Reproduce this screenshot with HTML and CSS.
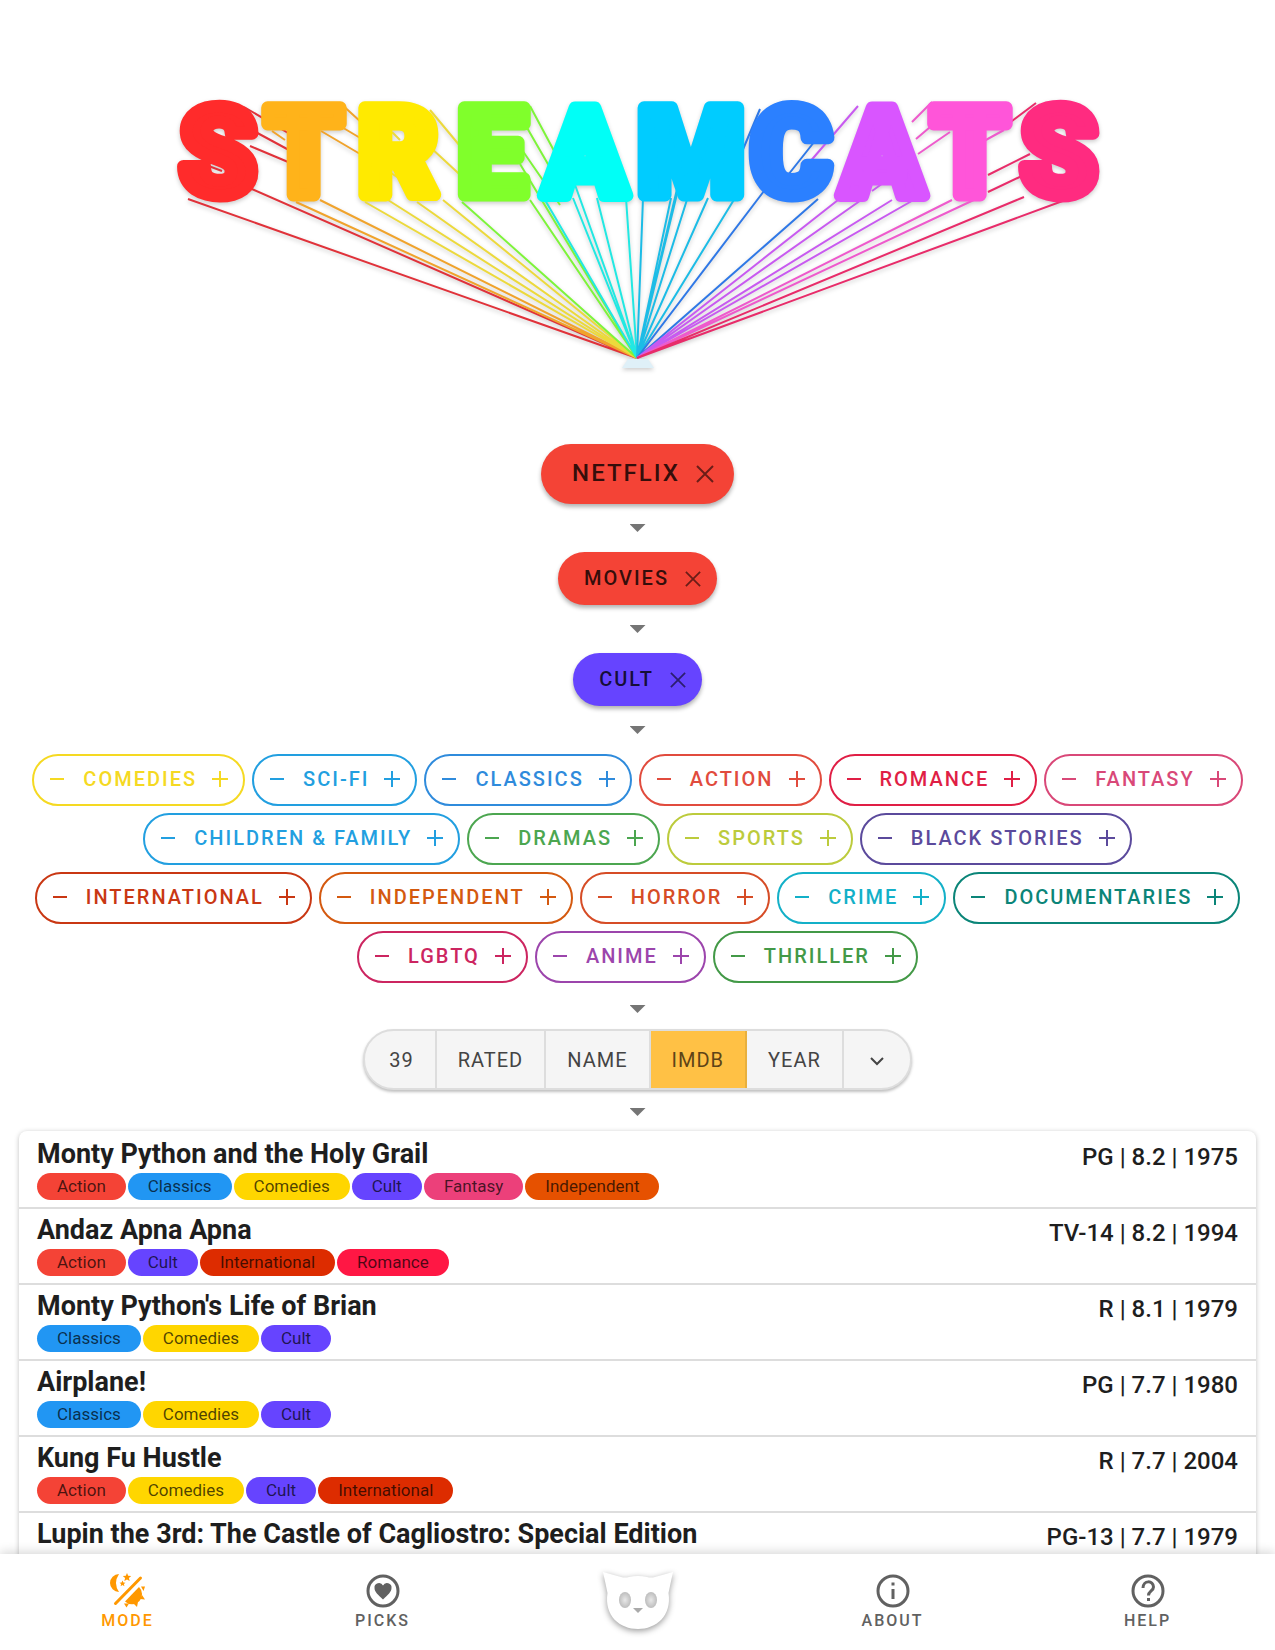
FILE: index.html
```html
<!DOCTYPE html>
<html lang="en">
<head>
<meta charset="utf-8">
<meta name="viewport" content="width=device-width, initial-scale=1">
<title>Streamcats</title>
<link rel="stylesheet" href="styles.css">
</head>
<body>
<svg class="sprite" width="0" height="0" aria-hidden="true">
  <symbol id="close" viewBox="0 0 18 18"><path d="M1 1 17 17M17 1 1 17" fill="none" stroke="currentColor" stroke-width="2"/></symbol>
  <symbol id="minus" viewBox="0 0 16 16"><path d="M1 8H15" fill="none" stroke="currentColor" stroke-width="2"/></symbol>
  <symbol id="plus" viewBox="0 0 16 16"><path d="M0 8H16M8 0V16" fill="none" stroke="currentColor" stroke-width="2"/></symbol>
</svg>
<main>
  <h1 class="logo">
    <svg viewBox="0 0 1275 386" role="img" aria-label="Streamcats">
      <g fill="none" stroke-width="2">
        <path stroke="#e0323a" d="M188 199 637 358 245 186M244 107 300 140M250 129 300 156M250 146 300 167M206 165 222 171"/>
        <path stroke="#f0a32c" d="M296 202 637 358 320 200M340 103 372 132M340 126 372 145M321 131 372 161M272 131 285 140"/>
        <path stroke="#ecd93c" d="M365 202 637 358 388 200M417 202 637 358 443 200M430 110 470 158M430 147 470 184M391 173 417 190M392 132 400 140"/>
        <path stroke="#7ef43a" d="M462 202 637 358 530 200M530 106 560 162M526 126 560 185M520 147 560 205M520 164 637 358"/>
        <path stroke="#22e8e2" d="M545 200 637 358 573 198M574 182 637 358 597 198M626 198 637 358"/>
        <path stroke="#1cbce6" d="M643 198 637 358 671 198M677 194 637 358 682 168M697 168 637 358 708 198M735 198 637 358"/>
        <path stroke="#2f78e6" d="M764 191 637 358 818 199M736 166 760 109M788 175 826 127"/>
        <path stroke="#c85af0" d="M838 200 637 358 864 198M892 200 637 358 917 198M802 171 858 106M872 191 890 178"/>
        <path stroke="#ee5acc" d="M952 200 637 358 978 198M912 122 932 102M916 139 936 122M918 154 950 132M984 141 1004 130"/>
        <path stroke="#e82c6a" d="M1024 197 637 358 1068 199M1008 124 1036 103M988 175 1030 154M988 192 1026 174M1066 138 1090 129"/>
      </g>
      <path class="logo-base" d="M628 359H648L654 368H622Z"/>
      <text class="logo-text" y="195" text-anchor="middle"><tspan x="218" class="l1">S</tspan><tspan x="304" class="l2">T</tspan><tspan x="398" class="l3">R</tspan><tspan x="492" class="l4">E</tspan><tspan x="585" class="l5">A</tspan><tspan x="691" class="l6">M</tspan><tspan x="791" class="l7">C</tspan><tspan x="882" class="l8">A</tspan><tspan x="970" class="l9">T</tspan><tspan x="1059" class="l10">S</tspan></text>
    </svg>
  </h1>

  <section class="path">
    <button class="pick large red">NETFLIX <svg><use href="#close"/></svg></button>
    <i class="arrow"></i>
    <button class="pick red">MOVIES <svg><use href="#close"/></svg></button>
    <i class="arrow"></i>
    <button class="pick cult">CULT <svg><use href="#close"/></svg></button>
    <i class="arrow"></i>
  </section>

  <section class="genres">
    <button class="chip c-comedies"><svg><use href="#minus"/></svg><span>COMEDIES</span><svg><use href="#plus"/></svg></button>
    <button class="chip c-scifi"><svg><use href="#minus"/></svg><span>SCI-FI</span><svg><use href="#plus"/></svg></button>
    <button class="chip c-classics"><svg><use href="#minus"/></svg><span>CLASSICS</span><svg><use href="#plus"/></svg></button>
    <button class="chip c-action"><svg><use href="#minus"/></svg><span>ACTION</span><svg><use href="#plus"/></svg></button>
    <button class="chip c-romance"><svg><use href="#minus"/></svg><span>ROMANCE</span><svg><use href="#plus"/></svg></button>
    <button class="chip c-fantasy"><svg><use href="#minus"/></svg><span>FANTASY</span><svg><use href="#plus"/></svg></button>
    <button class="chip c-scifi"><svg><use href="#minus"/></svg><span>CHILDREN &amp; FAMILY</span><svg><use href="#plus"/></svg></button>
    <button class="chip c-dramas"><svg><use href="#minus"/></svg><span>DRAMAS</span><svg><use href="#plus"/></svg></button>
    <button class="chip c-sports"><svg><use href="#minus"/></svg><span>SPORTS</span><svg><use href="#plus"/></svg></button>
    <button class="chip c-black"><svg><use href="#minus"/></svg><span>BLACK STORIES</span><svg><use href="#plus"/></svg></button>
    <button class="chip c-international"><svg><use href="#minus"/></svg><span>INTERNATIONAL</span><svg><use href="#plus"/></svg></button>
    <button class="chip c-independent"><svg><use href="#minus"/></svg><span>INDEPENDENT</span><svg><use href="#plus"/></svg></button>
    <button class="chip c-horror"><svg><use href="#minus"/></svg><span>HORROR</span><svg><use href="#plus"/></svg></button>
    <button class="chip c-crime"><svg><use href="#minus"/></svg><span>CRIME</span><svg><use href="#plus"/></svg></button>
    <button class="chip c-documentaries"><svg><use href="#minus"/></svg><span>DOCUMENTARIES</span><svg><use href="#plus"/></svg></button>
    <button class="chip c-lgbtq"><svg><use href="#minus"/></svg><span>LGBTQ</span><svg><use href="#plus"/></svg></button>
    <button class="chip c-anime"><svg><use href="#minus"/></svg><span>ANIME</span><svg><use href="#plus"/></svg></button>
    <button class="chip c-thriller"><svg><use href="#minus"/></svg><span>THRILLER</span><svg><use href="#plus"/></svg></button>
  </section>

  <section class="sorting">
    <i class="arrow"></i>
    <div class="segments">
      <button>39</button><button>RATED</button><button>NAME</button><button class="on">IMDB</button><button>YEAR</button><button aria-label="Descending"><svg viewBox="0 0 20 20"><path d="M4 8l6 6 6-6" fill="none" stroke="currentColor" stroke-width="2"/></svg></button>
    </div>
    <i class="arrow"></i>
  </section>

  <ul class="films">
    <li><div><h2>Monty Python and the Holy Grail</h2><p class="tags"><span class="t-action">Action</span><span class="t-classics">Classics</span><span class="t-comedies">Comedies</span><span class="t-cult">Cult</span><span class="t-fantasy">Fantasy</span><span class="t-independent">Independent</span></p></div><p class="meta">PG | 8.2 | 1975</p></li>
    <li><div><h2>Andaz Apna Apna</h2><p class="tags"><span class="t-action">Action</span><span class="t-cult">Cult</span><span class="t-international">International</span><span class="t-romance">Romance</span></p></div><p class="meta">TV-14 | 8.2 | 1994</p></li>
    <li><div><h2>Monty Python's Life of Brian</h2><p class="tags"><span class="t-classics">Classics</span><span class="t-comedies">Comedies</span><span class="t-cult">Cult</span></p></div><p class="meta">R | 8.1 | 1979</p></li>
    <li><div><h2>Airplane!</h2><p class="tags"><span class="t-classics">Classics</span><span class="t-comedies">Comedies</span><span class="t-cult">Cult</span></p></div><p class="meta">PG | 7.7 | 1980</p></li>
    <li><div><h2>Kung Fu Hustle</h2><p class="tags"><span class="t-action">Action</span><span class="t-comedies">Comedies</span><span class="t-cult">Cult</span><span class="t-international">International</span></p></div><p class="meta">R | 7.7 | 2004</p></li>
    <li><div><h2>Lupin the 3rd: The Castle of Cagliostro: Special Edition</h2></div><p class="meta">PG-13 | 7.7 | 1979</p></li>
  </ul>
</main>

<nav class="bar">
  <button class="on"><svg viewBox="0 0 34 34"><path d="M8 0A9 9 0 0 0 8 18Q2 9 8 0Z"/><path d="M16 -1l1.2 2.8 3 .2-2.3 2 .8 3-2.7-1.6L13.3 7l.8-3-2.3-2 3-.2zM11.500 6.500l.9 2 2.100.2-1.600 1.400.5 2.100-1.900-1.100-1.900 1.100.5-2.100-1.600-1.400 2.100-.2z"/><path d="M29.500 4 4.500 29.500" stroke="currentColor" stroke-width="3" stroke-linecap="round"/><path d="M28 13A10 10 0 0 1 14 27.500Z"/><path d="M30 12.500h4l-1.500 4.500zM31 21l3 4.500-5-.5zM22 29l5-1-1 5zM13 29.500h5l-2.500 4z"/></svg>MODE</button>
  <button><svg viewBox="0 0 34 34"><circle cx="17" cy="17" r="15" fill="none" stroke="currentColor" stroke-width="3"/><path d="M17 25.500C12 20.500 8.500 18 8.500 14A4.500 4.500 0 0 1 17 11.500 4.500 4.500 0 0 1 25.500 14C25.500 18 22 20.500 17 25.500Z"/></svg>PICKS</button>
  <button aria-label="Home"><svg class="cat" viewBox="0 0 74 64"><defs><radialGradient id="eye"><stop offset="0" stop-color="#e8e8e8"/><stop offset="1" stop-color="#bdbdbd"/></radialGradient></defs><path fill="#fff" d="M2 3 20 8Q24 9 28 8 37 6 46 8 50 9 54 8L72 3Q70 12 67.500 24C71 47 55 60 37 60S3 47 6.500 24Q4 12 2 3Z"/><g fill="url(#eye)"><ellipse cx="24" cy="31" rx="6" ry="8"/><ellipse cx="50" cy="31" rx="6" ry="8"/></g><path fill="#aaa" d="M32 39H42L37 44Z"/></svg></button>
  <button><svg viewBox="0 0 34 34"><circle cx="17" cy="17" r="15" fill="none" stroke="currentColor" stroke-width="3"/><path d="M15.500 8.500h3v3h-3zM15.500 15h3v10h-3z"/></svg>ABOUT</button>
  <button><svg viewBox="0 0 34 34"><circle cx="17" cy="17" r="15" fill="none" stroke="currentColor" stroke-width="3"/><path d="M12 14C12 6 22.500 6 22.500 13 22.500 17 17.500 17 17.500 21.500" fill="none" stroke="currentColor" stroke-width="3"/><path d="M16 24h3v3h-3z"/></svg>HELP</button>
</nav>
</body>
</html>
```
FILE: styles.css
```css
* { box-sizing: border-box; }
body { margin: 0; background: #fff; color: #1e1e1e; font-family: Roboto, "Liberation Sans", sans-serif; height: 100vh; overflow: hidden; display: flex; flex-direction: column; }
main { flex: 1; overflow: hidden; min-height: 0; }
button { font: inherit; border: 0; background: none; cursor: pointer; margin: 0; }
h1, h2, p, ul { margin: 0; padding: 0; }
.sprite { position: absolute; }

.logo svg { display: block; width: 100%; filter: drop-shadow(0 2px 2px rgba(0, 0, 0, .2)); }
.logo-base { fill: #dff0f8; }
.logo-text { font-size: 122px; font-weight: 900; stroke-width: 13px; stroke-linejoin: round; }
.l1 { fill: #ff2b2b; stroke: #ff2b2b; }
.l2 { fill: #ffb31a; stroke: #ffb31a; }
.l3 { fill: #ffea00; stroke: #ffea00; }
.l4 { fill: #80ff2b; stroke: #80ff2b; }
.l5 { fill: #00fff7; stroke: #00fff7; }
.l6 { fill: #00ccff; stroke: #00ccff; }
.l7 { fill: #2b80ff; stroke: #2b80ff; }
.l8 { fill: #d955ff; stroke: #d955ff; }
.l9 { fill: #ff55d9; stroke: #ff55d9; }
.l10 { fill: #ff2b80; stroke: #ff2b80; }

.path { display: flex; flex-direction: column; align-items: center; padding-top: 58px; }
.arrow { width: 16px; height: 8px; margin: 20px 0; background: #757575; clip-path: polygon(0 0, 100% 0, 50% 100%); }
.pick { display: flex; align-items: center; gap: 16px; height: 53px; padding: 0 16px 2px 26px; border-radius: 30px; font-size: 20px; font-weight: 500; letter-spacing: 2px; color: rgba(0, 0, 0, .8); box-shadow: 0 3px 4px rgba(0, 0, 0, .3); }
.pick svg { width: 16px; height: 16px; margin-top: 2px; opacity: .7; }
.pick.large { height: 60px; padding: 0 20px 3px 31px; font-size: 24px; }
.pick.large svg { width: 18px; height: 18px; }
.red { background: #f44336; }
.cult { background: #6644ff; }

.genres { display: flex; flex-wrap: wrap; justify-content: center; gap: 7px; padding: 0 24px; }
.chip { display: flex; align-items: center; height: 52px; padding: 0 15px 2px; border: 2px solid; border-radius: 26px; font-size: 20px; font-weight: 500; letter-spacing: 2px; }
.chip svg { width: 16px; height: 16px; }
.chip span { margin: 0 15px 0 18px; }
.c-comedies { color: #f5d922; }
.c-scifi { color: #229fe0; }
.c-classics { color: #2f8bdc; }
.c-action { color: #e14b3d; }
.c-romance { color: #e01e45; }
.c-fantasy { color: #d94878; }
.c-dramas { color: #4ca650; }
.c-sports { color: #bccb3c; }
.c-black { color: #5b4a9c; }
.c-international { color: #c93713; }
.c-independent { color: #d4590f; }
.c-horror { color: #d64c26; }
.c-crime { color: #13b0c8; }
.c-documentaries { color: #0b8578; }
.c-lgbtq { color: #cc2560; }
.c-anime { color: #9c45ac; }
.c-thriller { color: #439947; }

.sorting { display: flex; flex-direction: column; align-items: center; }
.sorting .arrow { margin: 22px 0 16px; }
.sorting .arrow:last-child { margin: 18px 0 15px; }
.segments { display: flex; height: 61px; border-radius: 31px; overflow: hidden; border: 2px solid #ddd; background: #f5f5f5; box-shadow: 0 2px 3px rgba(0, 0, 0, .25); }
.segments button { padding: 0 21px; font-size: 20px; letter-spacing: 1px; color: #444; border-right: 2px solid #ddd; }
.segments button:first-child { padding-left: 24px; }
.segments button:last-child { padding: 0 23px; border: 0; }
.segments .on { background: #ffc145; color: #5e4417; border-color: #e8b03e; }
.segments svg { display: block; width: 20px; height: 20px; }

.films { list-style: none; margin: 0 19px; padding-top: 2px; border-radius: 8px; box-shadow: 0 1px 5px rgba(0, 0, 0, .25); }
.films li { display: flex; justify-content: space-between; height: 76px; padding: 0 18px; border-bottom: 2px solid #ddd; }
.films h2 { font-size: 27px; line-height: 32px; font-weight: 700; padding-top: 5px; }
.tags { display: flex; gap: 2px; padding-top: 3px; }
.tags span { padding: 0 20px; border-radius: 14px; font-size: 17px; line-height: 27px; color: rgba(0, 0, 0, .7); }
.t-action { background: #f44336; }
.t-classics { background: #2196f3; }
.t-comedies { background: #ffd600; }
.t-cult { background: #6644ff; }
.t-fantasy { background: #ec407a; }
.t-independent { background: #e65100; }
.t-international { background: #dd2c00; }
.t-romance { background: #ff1744; }
.meta { font-size: 24px; line-height: 32px; padding-top: 8px; font-weight: 500; }

.bar { position: relative; display: grid; grid-template-columns: repeat(5, 1fr); height: 96px; background: #fff; box-shadow: 0 -2px 10px rgba(0, 0, 0, .16); }
.bar button { display: flex; flex-direction: column; align-items: center; padding: 20px 0 0; gap: 3px; font-size: 16px; line-height: 19px; font-weight: 500; letter-spacing: 2px; color: #616161; }
.bar .on { color: #ff9800; }
.bar svg { width: 34px; height: 34px; fill: currentColor; overflow: visible; }
.bar .cat { width: 74px; height: 64px; margin-top: -5px; filter: drop-shadow(0 2px 3px rgba(0, 0, 0, .4)); }
```
